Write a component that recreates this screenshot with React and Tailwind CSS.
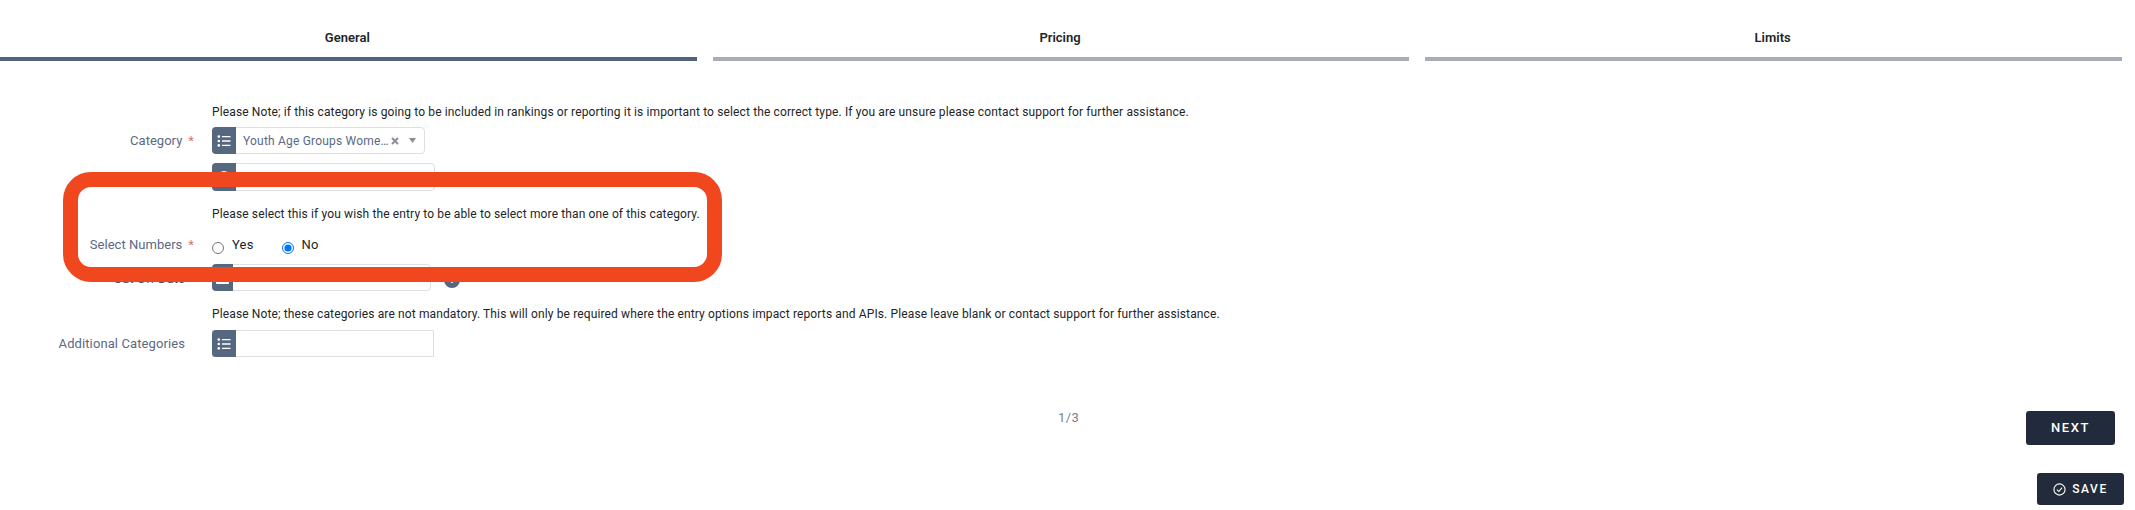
import React from "react";

const ListIcon = () => (
  <svg width="14" height="14" viewBox="0 0 14 14" fill="none" className="text-white">
    <circle cx="1.8" cy="2.6" r="1.3" fill="currentColor" />
    <circle cx="1.8" cy="7" r="1.3" fill="currentColor" />
    <circle cx="1.8" cy="11.4" r="1.3" fill="currentColor" />
    <path d="M5 2.6h8.5M5 7h8.5M5 11.4h8.5" stroke="currentColor" strokeWidth="1.4" />
  </svg>
);

const Label = ({ children, req }) => (
  <label className="w-[212px] shrink-0 pr-[18px] text-right text-[13px] tracking-[0.03px] text-[#5a6a85]">
    {children}
    {req && <span className="ml-[6px] text-[#d9736f]">*</span>}
  </label>
);

const Tab = ({ title, active }) => (
  <div className="flex flex-col items-center">
    <div className="flex h-[57px] w-full items-end justify-center pb-[12px] pr-[2px] text-[13px] leading-[15px] font-semibold text-[#212529]">{title}</div>
    <div className={`h-[4px] w-full ${active ? "bg-[#51627c]" : "bg-[#a6adb6]"}`} />
  </div>
);

const Addon = ({ children, w = "w-[24px]" }) => (
  <div className={`-my-px -ml-px flex ${w} shrink-0 items-center justify-center rounded-l-[4px] bg-[#566880]`}>{children}</div>
);

const Note = ({ children, className }) => (
  <p className={`ml-[212px] text-[12px] leading-[18px] tracking-[0.13px] text-[#212529] ${className}`}>{children}</p>
);

export default function App() {
  return (
    <div className="relative h-[510px] w-[2135px] overflow-hidden bg-white font-['Roboto',sans-serif]">
      <div className="grid w-[2122px] grid-cols-3 gap-4">
        <Tab title="General" active />
        <Tab title="Pricing" />
        <Tab title="Limits" />
      </div>

      <div className="mt-[42px]">
        <Note>
          Please Note; if this category is going to be included in rankings or reporting it is important to select the correct type. If you are unsure please contact support for further assistance.
        </Note>
        <div className="mt-[6px] flex items-center">
          <Label req>Category</Label>
          <div className="flex h-[27px] w-[213px] rounded-[4px] border border-[#dcdfe4]">
            <Addon><ListIcon /></Addon>
            <div className="flex flex-1 items-center pl-[7px] pr-[8px] text-[12px] tracking-[0.2px] whitespace-nowrap text-[#5a6a85]">
              <span>Youth Age Groups Wome…</span>
              <svg width="8" height="8" viewBox="0 0 8 8" className="ml-auto" stroke="#8a8f98" strokeWidth="2">
                <path d="M1 1l6 6M7 1l-6 6" />
              </svg>
              <svg width="7" height="5" viewBox="0 0 7 5" className="ml-[10px]" fill="#8a8f98">
                <path d="M0 0h7L3.5 5z" />
              </svg>
            </div>
          </div>
        </div>
        <div className="mt-[9px] flex items-center">
          <Label />
          <div className="flex h-[28px] w-[223px] rounded-[4px] border border-[#dcdfe4]">
            <Addon>
              <span className="h-[12px] w-[12px] rounded-full bg-white" />
            </Addon>
          </div>
        </div>
        <Note className="mt-[14px]">
          Please select this if you wish the entry to be able to select more than one of this category.
        </Note>
        <div className="mt-[11px] flex h-[22px] items-center">
          <Label req>Select Numbers</Label>
          <label className="flex items-center text-[13px] tracking-[0.2px] text-[#212529]">
            <input type="radio" name="n" className="m-0 mt-[6px] h-[12px] w-[12px]" readOnly />
            <span className="ml-[8px]">Yes</span>
          </label>
          <label className="ml-[28px] flex items-center text-[13px] tracking-[0.2px] text-[#212529]">
            <input type="radio" name="n" defaultChecked className="m-0 mt-[6px] h-[12px] w-[12px]" />
            <span className="ml-[8px]">No</span>
          </label>
        </div>
        <div className="mt-[8px] flex items-center">
          <label className="mt-[3px] w-[212px] shrink-0 pr-[27px] text-right text-[13px] tracking-[0.03px] text-[#4a5568]">Cut Off Date</label>
          <div className="flex h-[27px] w-[219px] rounded-[4px] border border-[#dcdfe4]">
            <Addon w="w-[21px]">
              <span className="h-[12px] w-[13px] rounded-[1px] bg-white" />
            </Addon>
          </div>
          <div className="ml-[13px] mt-[5px] flex h-[16px] w-[16px] items-center justify-center rounded-full bg-[#566880] text-[11px] font-bold text-white">i</div>
        </div>
        <Note className="mt-[14px]">
          Please Note; these categories are not mandatory. This will only be required where the entry options impact reports and APIs. Please leave blank or contact support for further assistance.
        </Note>
        <div className="mt-[7px] flex items-center">
          <label className="w-[212px] shrink-0 pr-[27px] text-right text-[13px] tracking-[0.1px] text-[#5a6a85]">Additional Categories</label>
          <div className="flex h-[27px] w-[222px] border border-[#dcdfe4]">
            <Addon><ListIcon /></Addon>
          </div>
        </div>
      </div>

      <div className="relative mt-[54px] flex justify-end pr-[20px]">
        <span className="absolute left-[1058px] top-0 text-[13px] leading-[13px] tracking-[0.4px] text-[#7a7f87]">1/3</span>
        <button className="h-[34px] w-[89px] rounded-[3px] bg-[#212b3b] text-[13px] font-medium tracking-[1.6px] text-white">NEXT</button>
      </div>
      <div className="mt-[28px] flex justify-end pr-[11px]">
        <button className="flex h-[32px] w-[87px] items-center justify-center gap-[6px] rounded-[3px] bg-[#212b3b] text-[12px] font-medium tracking-[1.6px] text-white">
          <svg width="13" height="13" viewBox="0 0 14 14" fill="none" stroke="currentColor" strokeWidth="1.2">
            <circle cx="7" cy="7" r="6" />
            <path d="M4.2 7.2 6.2 9.2 9.8 5" />
          </svg>
          SAVE
        </button>
      </div>

      <div className="absolute left-[63px] top-[172px] h-[110px] w-[659px] rounded-[28px] border-[15px] border-[#f0471e]" />
    </div>
  );
}
